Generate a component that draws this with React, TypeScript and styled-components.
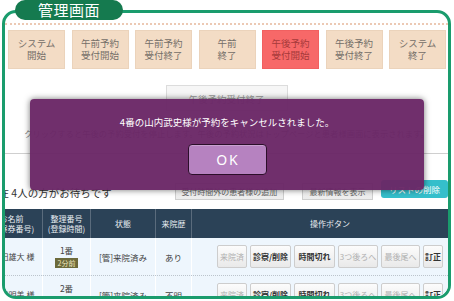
import React from "react";
import styled, { createGlobalStyle, css } from "styled-components";

const GlobalStyle = createGlobalStyle`
  html, body { margin: 0; padding: 0; background: #fff; }
  body { font-family: "Noto Sans CJK JP", "Noto Sans", sans-serif; }
  * { box-sizing: border-box; }
`;

const Root = styled.div`
  position: relative;
  width: 454px;
  height: 301px;
  overflow: hidden;
  background: #fff;
`;

const Tab = styled.div`
  position: absolute;
  left: 15px;
  top: 0;
  width: 108px;
  height: 20px;
  border-radius: 10px;
  background: #157a4f;
  color: #fff;
  font-size: 15px;
  line-height: 20px;
  letter-spacing: 0.5px;
  text-align: center;
  z-index: 2;
`;

const Frame = styled.div`
  margin: 10px 0 0 2px;
  width: 449px;
  height: 289px;
  border: 3px solid #1a9c6d;
  border-radius: 14px;
  overflow: hidden;
  background: #fff;
`;

const Dotted = styled.div`
  margin-top: 10px;
  height: 0;
  border-top: 2px dotted #ecc9b4;
`;

const ActionBar = styled.div`
  display: flex;
  gap: 6.5px;
  margin-top: 5px;
  padding-left: 3px;
`;

const ActionButton = styled.div<{ $active?: boolean }>`
  width: 57px;
  height: 39px;
  display: flex;
  align-items: center;
  justify-content: center;
  text-align: center;
  font-size: 9.5px;
  line-height: 11.5px;
  white-space: pre-line;
  background: #f3dcc5;
  border: 1px solid #ebd3bb;
  color: #746e68;
  ${(p) =>
    p.$active &&
    css`
      background: #f76868;
      border-color: #f16060;
      color: #a63a3a;
    `}
`;

const StatusSection = styled.div`
  display: flex;
  flex-direction: column;
  align-items: center;
  padding: 16px 0 14px;
  border-bottom: 1px solid #cfcfcf;
`;

const StatusBox = styled.div`
  width: 122px;
  height: 26px;
  border: 1px solid #dcdcdc;
  background: #f6f6f6;
  color: #9a9a9a;
  font-size: 9.5px;
  display: flex;
  align-items: flex-start;
  justify-content: center;
  padding-top: 6px;
`;

const Note = styled.div`
  margin-top: 16px;
  height: 12px;
  font-size: 8.3px;
  line-height: 12px;
  color: #777;
  white-space: nowrap;
`;

const Shifted = styled.div`
  margin-left: -24px;
`;

const WaitRow = styled.div`
  display: flex;
  align-items: flex-end;
  height: 20px;
  margin-top: 26px;
  padding-left: 7px;
`;

const WaitText = styled.div`
  width: 195px;
  font-size: 10.5px;
  line-height: 13px;
  color: #333;
  white-space: nowrap;
  margin-bottom: 1px;
`;

const GrayButton = styled.div<{ $w: number; $ml: number }>`
  width: ${(p) => p.$w}px;
  margin-left: ${(p) => p.$ml}px;
  height: 17px;
  border: 1px solid #cfcfcf;
  background: linear-gradient(#fbfbfb, #ececec);
  font-size: 8px;
  color: #666;
  display: flex;
  align-items: center;
  justify-content: center;
  white-space: nowrap;
`;

const TealButton = styled.div`
  width: 70px;
  margin-left: 8px;
  margin-bottom: 2px;
  height: 18px;
  border-radius: 3px;
  background: #35bfcb;
  color: #fff;
  font-size: 8.5px;
  display: flex;
  align-items: center;
  justify-content: center;
  white-space: nowrap;
`;

const Table = styled.div`
  margin-top: 9px;
  width: 487px;
`;

const cols = "62px 48px 65px 36px 276px";

const HeadRow = styled.div`
  display: grid;
  grid-template-columns: ${cols};
  height: 29px;
  background: #2b4257;
`;

const HeadCell = styled.div`
  display: flex;
  align-items: center;
  justify-content: center;
  text-align: center;
  white-space: pre-line;
  color: #e9eef3;
  font-size: 8px;
  line-height: 10px;
  border-right: 1px solid #5a6b7c;
  &:last-child { border-right: none; }
`;

const BodyRow = styled.div`
  display: grid;
  grid-template-columns: ${cols};
  height: 38px;
  background: #eef6fd;
  border-bottom: 1px dotted #bcc4cc;
`;

const Cell = styled.div`
  display: flex;
  flex-direction: column;
  align-items: center;
  justify-content: center;
  font-size: 8.5px;
  color: #444;
  white-space: nowrap;
  border-right: 1px solid #fff;
  &:last-child { border-right: none; }
`;

const NameCell = styled(Cell)`
  font-size: 8px;
  padding-left: 4px;
`;

const Number = styled.div`
  line-height: 11px;
  font-size: 8.5px;
  color: #444;
`;

const Badge = styled.div`
  margin-top: 2px;
  height: 10px;
  padding: 0 3px;
  background: #6c6a3b;
  color: #efe7bf;
  font-size: 7px;
  line-height: 10px;
`;

const OpsCell = styled.div`
  display: flex;
  align-items: center;
  justify-content: center;
  gap: 3px;
`;

const OpButton = styled.div<{ $w: number; $off?: boolean }>`
  width: ${(p) => p.$w}px;
  height: 23px;
  border: 1px solid #cdcdcd;
  border-radius: 2px;
  background: linear-gradient(#fcfcfc, #e9e9e9);
  font-size: 8px;
  display: flex;
  align-items: center;
  justify-content: center;
  white-space: nowrap;
  color: ${(p) => (p.$off ? "#b0b0b0" : "#333")};
  font-weight: ${(p) => (p.$off ? 400 : 700)};
`;

const Modal = styled.div`
  position: absolute;
  left: 30px;
  top: 99px;
  width: 394px;
  height: 91px;
  border-radius: 4px;
  background: rgba(106, 39, 102, 0.96);
  box-shadow: 0 0 6px rgba(0, 0, 0, 0.55);
  display: flex;
  flex-direction: column;
  align-items: center;
  padding-top: 17px;
  z-index: 3;
`;

const ModalText = styled.div`
  font-size: 9.5px;
  line-height: 12px;
  color: #fff;
  white-space: nowrap;
`;

const OkButton = styled.div`
  margin-top: 16px;
  width: 79px;
  height: 31px;
  border-radius: 4px;
  background: #b682c0;
  border: 1px solid #2c0f2a;
  box-shadow: inset 0 1px 0 rgba(255, 255, 255, 0.25);
  color: #fff;
  font-family: "Noto Sans", sans-serif;
  font-size: 14px;
  letter-spacing: 2px;
  display: flex;
  align-items: center;
  justify-content: center;
  padding-left: 2px;
`;

const actions = [
  { label: "システム\n開始" },
  { label: "午前予約\n受付開始" },
  { label: "午前予約\n受付終了" },
  { label: "午前\n終了" },
  { label: "午後予約\n受付開始", active: true },
  { label: "午後予約\n受付終了" },
  { label: "システム\n終了" },
];

const ops = [
  { label: "来院済", w: 30, off: true },
  { label: "診察/削除", w: 41 },
  { label: "時間切れ", w: 41 },
  { label: "3つ後ろへ", w: 40, off: true },
  { label: "最後尾へ", w: 39, off: true },
  { label: "訂正", w: 20 },
];

const patients = [
  { name: "原田雄大 様", no: "1番", ago: "2分前", state: "[管]来院済み", visit: "あり" },
  { name: "原田明美 様", no: "2番", ago: "2分前", state: "[管]来院済み", visit: "不明" },
];

export default function App() {
  return (
    <Root>
      <GlobalStyle />
      <Tab>管理画面</Tab>
      <Frame>
        <Dotted />
        <ActionBar>
          {actions.map((a) => (
            <ActionButton key={a.label} $active={a.active}>
              {a.label}
            </ActionButton>
          ))}
        </ActionBar>
        <StatusSection>
          <StatusBox>午後予約受付終了</StatusBox>
          <Note>
            クリックすると午後の予約受付を停止します。午後の予約状況はトップページと患者様画面に表示されます。
          </Note>
        </StatusSection>
        <Shifted>
          <WaitRow>
            <WaitText>現在 4人の方がお待ちです</WaitText>
            <GrayButton $w={114} $ml={0}>受付時間外の患者様の追加</GrayButton>
            <GrayButton $w={74} $ml={18}>最新情報を表示</GrayButton>
            <TealButton>リストの削除</TealButton>
          </WaitRow>
          <Table>
            <HeadRow>
              <HeadCell>{"お名前\n(診察券番号)"}</HeadCell>
              <HeadCell>{"整理番号\n(登録時間)"}</HeadCell>
              <HeadCell>状態</HeadCell>
              <HeadCell>来院歴</HeadCell>
              <HeadCell>操作ボタン</HeadCell>
            </HeadRow>
            {patients.map((p) => (
              <BodyRow key={p.no}>
                <NameCell>{p.name}</NameCell>
                <Cell>
                  <Number>{p.no}</Number>
                  <Badge>{p.ago}</Badge>
                </Cell>
                <Cell>{p.state}</Cell>
                <Cell>{p.visit}</Cell>
                <OpsCell>
                  {ops.map((o) => (
                    <OpButton key={o.label} $w={o.w} $off={o.off}>
                      {o.label}
                    </OpButton>
                  ))}
                </OpsCell>
              </BodyRow>
            ))}
          </Table>
        </Shifted>
      </Frame>
      <Modal>
        <ModalText>4番の山内武史様が予約をキャンセルされました。</ModalText>
        <OkButton>OK</OkButton>
      </Modal>
    </Root>
  );
}
